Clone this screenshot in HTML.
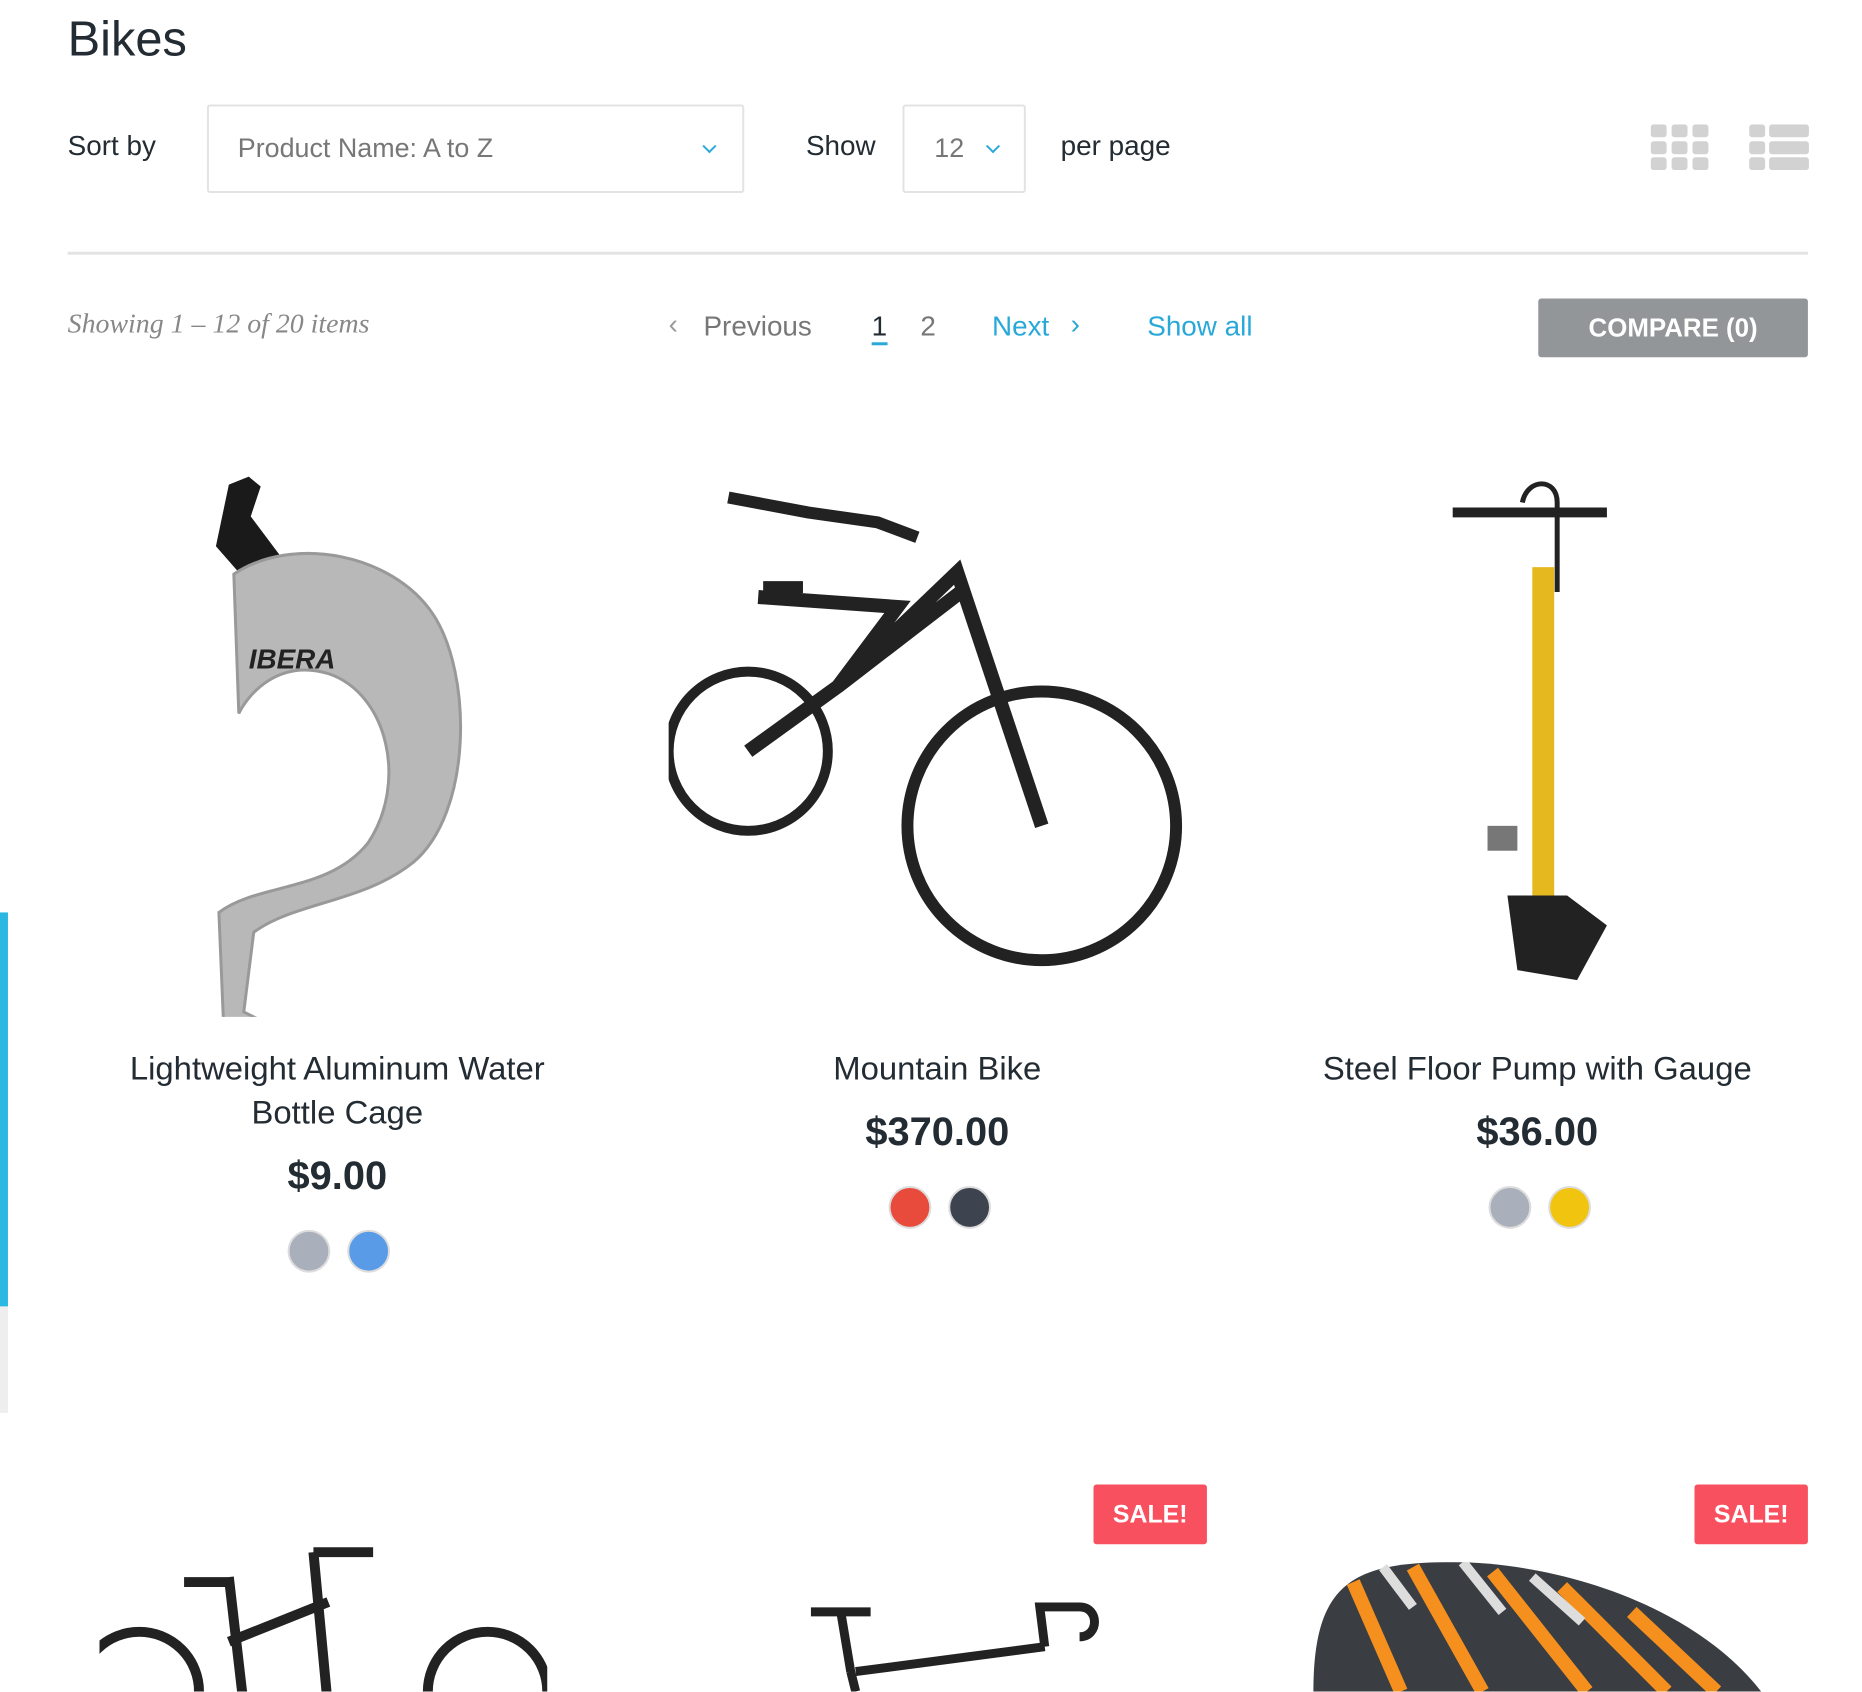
<!DOCTYPE html>
<html><head><meta charset="utf-8"><style>
*{margin:0;padding:0;box-sizing:border-box}
body{width:1862px;height:1680px;overflow:hidden;background:#fff;font-family:"Liberation Sans",sans-serif;color:#232b33;position:relative}
#w{position:absolute;left:0;top:0;width:1862px;height:1700px;transform:scale(0.995);transform-origin:0 0}
.a{position:absolute;white-space:nowrap}
.sel{position:absolute;border:2px solid #e3e3e3;border-radius:3px}
.chev{position:absolute;width:10px;height:10px;border-right:2px solid #2aa9d9;border-bottom:2px solid #2aa9d9;transform:rotate(45deg)}
.name{position:absolute;width:500px;text-align:center;font-size:33px;line-height:44px;color:#232b33}
.price{position:absolute;width:500px;text-align:center;font-size:40px;font-weight:bold}
.sw{position:absolute;width:43px;height:43px;border-radius:50%;border:2px solid #ddd}
.sale{position:absolute;background:#f9505f;color:#fff;font-weight:bold;font-size:25px;text-align:center;line-height:60px;width:114px;height:60px;border-radius:3px}
</style></head><body><div id="w">
<div class="a" style="left:68px;top:12px;font-size:49px">Bikes</div>
<div class="a" style="left:68px;top:131px;font-size:28px">Sort by</div>
<div class="sel" style="left:208px;top:105px;width:540px;height:89px"></div>
<div class="a" style="left:239px;top:134px;font-size:27px;color:#777">Product Name: A to Z</div>
<div class="chev" style="left:708px;top:142px"></div>
<div class="a" style="left:810px;top:131px;font-size:28px">Show</div>
<div class="sel" style="left:907px;top:105px;width:124px;height:89px"></div>
<div class="a" style="left:939px;top:134px;font-size:27px;color:#777">12</div>
<div class="chev" style="left:993px;top:142px"></div>
<div class="a" style="left:1066px;top:131px;font-size:28px">per page</div>
<svg class="a" style="left:1659px;top:125px" width="160" height="46">
<g fill="#d2d2d2">
<rect x="0" y="0" width="16" height="13" rx="3"/><rect x="21" y="0" width="16" height="13" rx="3"/><rect x="42" y="0" width="16" height="13" rx="3"/>
<rect x="0" y="17" width="16" height="13" rx="3"/><rect x="21" y="17" width="16" height="13" rx="3"/><rect x="42" y="17" width="16" height="13" rx="3"/>
<rect x="0" y="33" width="16" height="13" rx="3"/><rect x="21" y="33" width="16" height="13" rx="3"/><rect x="42" y="33" width="16" height="13" rx="3"/>
<rect x="99" y="0" width="16" height="13" rx="3"/><rect x="119" y="0" width="40" height="13" rx="3"/>
<rect x="99" y="17" width="16" height="13" rx="3"/><rect x="119" y="17" width="40" height="13" rx="3"/>
<rect x="99" y="33" width="16" height="13" rx="3"/><rect x="119" y="33" width="40" height="13" rx="3"/>
</g></svg>
<div class="a" style="left:68px;top:309px;width:1749px;height:3px;background:#e3e3e3;top:253px"></div>
<div class="a" style="left:68px;top:310px;font-size:28px;font-style:italic;font-family:'Liberation Serif',serif;color:#888">Showing 1 – 12 of 20 items</div>
<div class="a" style="left:672px;top:310px;font-size:28px;color:#999">‹</div>
<div class="a" style="left:707px;top:312px;font-size:28px;color:#777">Previous</div>
<div class="a" style="left:876px;top:312px;font-size:28px;color:#232b33">1</div>
<div class="a" style="left:876px;top:344px;width:16px;height:3px;background:#2aa9d9"></div>
<div class="a" style="left:925px;top:312px;font-size:28px;color:#777">2</div>
<div class="a" style="left:997px;top:312px;font-size:28px;color:#2aa9d9">Next</div>
<div class="a" style="left:1076px;top:310px;font-size:28px;color:#2aa9d9">›</div>
<div class="a" style="left:1153px;top:312px;font-size:28px;color:#2aa9d9">Show all</div>
<div class="a" style="left:1546px;top:300px;width:271px;height:59px;background:#939699;border-radius:3px;color:#fff;font-weight:bold;font-size:26px;text-align:center;line-height:59px">COMPARE (0)</div>
<div class="a" style="left:0;top:917px;width:8px;height:396px;background:#2ab8e3"></div>
<div class="a" style="left:0;top:1313px;width:8px;height:107px;background:#eee"></div>
<svg class="a" style="left:190px;top:477px" width="340" height="545">
<path d="M40 10 l20 -8 l12 10 l-10 30 l30 40 l10 20 l-40 10 l-35 -40z" fill="#1a1a1a"/>
<path d="M45 100 c60 -40 160 -20 200 40 c40 60 40 200 -20 250 c-50 40 -120 40 -160 70 l-10 80 l60 30 l-20 10 l-60 -20 l-5 -120 c40 -30 110 -20 150 -70 c40 -60 20 -150 -40 -170 c-50 -15 -80 20 -90 40z" fill="#b8b8b8" stroke="#999" stroke-width="3"/>
<text x="60" y="195" font-size="28" font-weight="bold" font-style="italic" fill="#222" font-family="Liberation Sans">IBERA</text>
</svg>
<svg class="a" style="left:672px;top:480px" width="540" height="540" fill="none" stroke="#222">
<circle cx="80" cy="275" r="80" stroke-width="10"/>
<circle cx="375" cy="350" r="135" stroke-width="12"/>
<path d="M80 275 L170 210 L290 95 L375 350 M170 210 L230 130 L90 120 M170 210 L300 110" stroke-width="14"/>
<path d="M95 110 h40 M60 20 l80 15 l70 10 l40 15" stroke-width="12"/>
</svg>
<svg class="a" style="left:1455px;top:480px" width="180" height="540">
<path d="M5 35 h155" stroke="#222" stroke-width="10"/>
<path d="M75 25 c5 -25 35 -25 35 0 v90" stroke="#222" stroke-width="5" fill="none"/>
<rect x="85" y="90" width="22" height="340" fill="#e5b820"/>
<rect x="40" y="350" width="30" height="25" fill="#777"/>
<path d="M60 420 l60 0 l40 30 l-30 55 l-60 -10 z" fill="#222"/>
</svg>
<div class="name" style="left:89px;top:1052px">Lightweight Aluminum Water<br>Bottle Cage</div>
<div class="price" style="left:89px;top:1160px">$9.00</div>
<div class="sw" style="left:289px;top:1236px;background:#a9b0bc"></div>
<div class="sw" style="left:349px;top:1236px;background:#5a9be8"></div>
<div class="name" style="left:692px;top:1052px">Mountain Bike</div>
<div class="price" style="left:692px;top:1116px">$370.00</div>
<div class="sw" style="left:893px;top:1192px;background:#e84b3c"></div>
<div class="sw" style="left:953px;top:1192px;background:#3d444f"></div>
<div class="name" style="left:1295px;top:1052px">Steel Floor Pump with Gauge</div>
<div class="price" style="left:1295px;top:1116px">$36.00</div>
<div class="sw" style="left:1496px;top:1192px;background:#a9b0bc"></div>
<div class="sw" style="left:1556px;top:1192px;background:#f1c40f"></div>
<div class="sale" style="left:1099px;top:1492px">SALE!</div>
<div class="sale" style="left:1703px;top:1492px">SALE!</div>
<svg class="a" style="left:100px;top:1550px" width="450" height="150" fill="none" stroke="#222" stroke-width="10">
<path d="M130 35 l15 130 M215 10 l15 160 M130 100 L230 60 M85 40 h50 M215 10 h60"/>
<circle cx="40" cy="150" r="60"/><circle cx="390" cy="150" r="60"/>
</svg>
<svg class="a" style="left:800px;top:1600px" width="350" height="100" fill="none" stroke="#222" stroke-width="9">
<path d="M15 20 h60 M45 20 l10 60 M60 80 L250 55 M250 55 l-5 -40 h40 c20 0 20 30 0 30 M55 80 l5 20"/>
</svg>
<svg class="a" style="left:1300px;top:1570px" width="470" height="130">
<path d="M20 130 C20 20 60 0 160 0 C260 0 400 40 470 130 Z" fill="#3a3d42"/>
<path d="M60 20 l48 110 M120 5 l70 125 M200 10 l95 120 M270 25 l105 105 M340 50 l85 80" stroke="#f5901e" stroke-width="14"/>
<path d="M90 5 l30 40 M170 0 l40 50 M240 15 l50 45" stroke="#ddd" stroke-width="10"/>
</svg>
</div></body></html>
